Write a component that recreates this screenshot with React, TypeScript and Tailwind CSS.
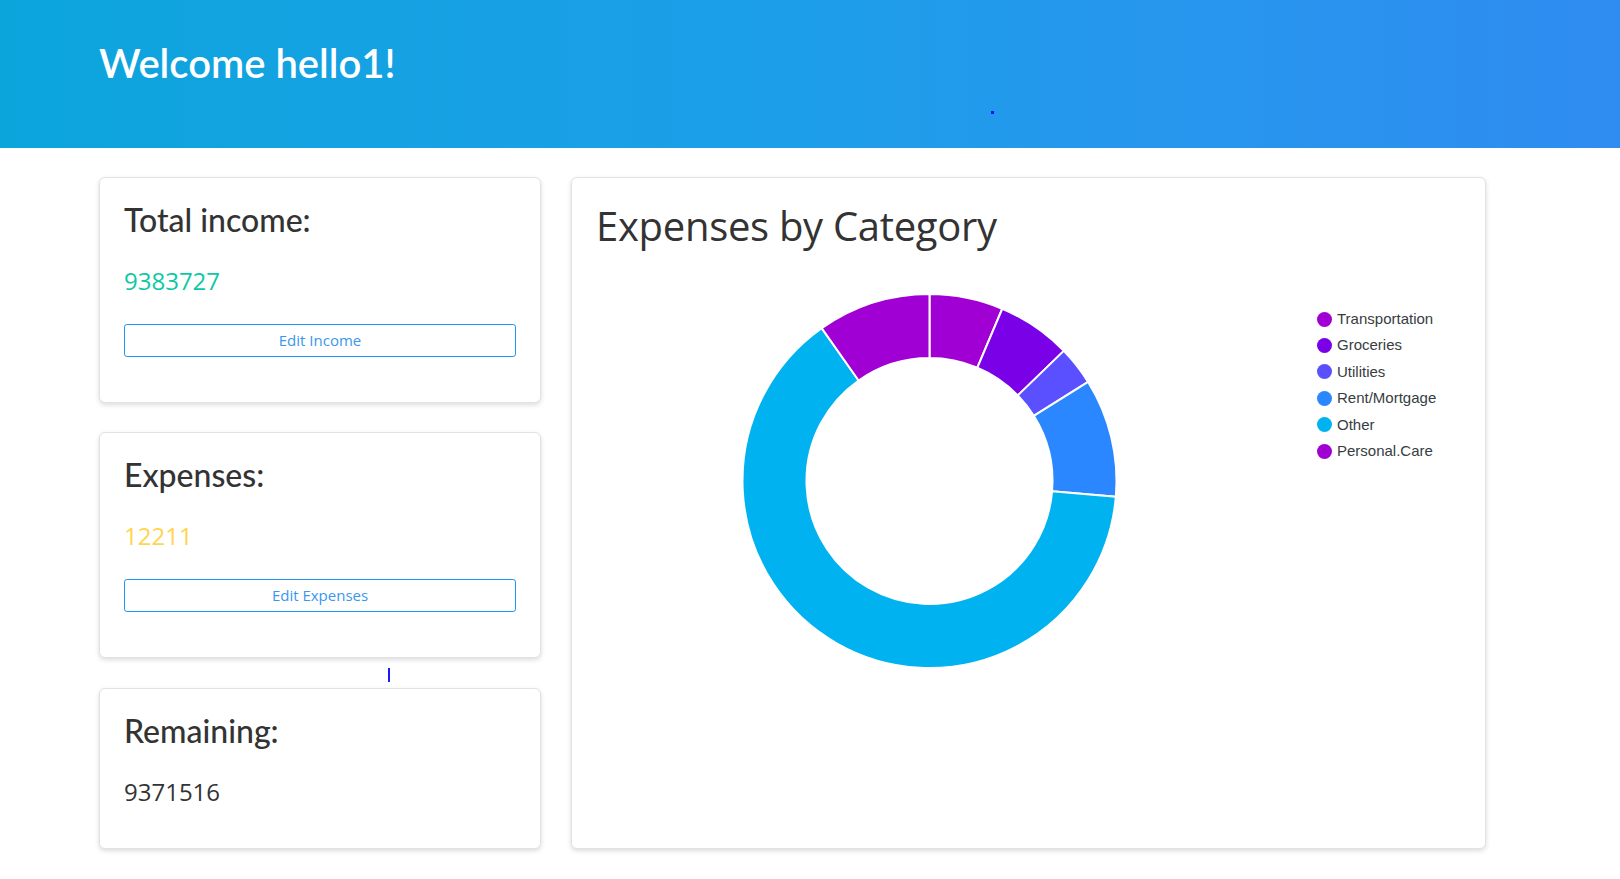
import React from "react";

type Slice = { label: string; color: string; start: number; end: number };

const slices: Slice[] = [
  { label: "Transportation", color: "#a000d4", start: 0, end: 22.9 },
  { label: "Groceries", color: "#7a00e8", start: 22.9, end: 45.9 },
  { label: "Utilities", color: "#5a50ff", start: 45.9, end: 58 },
  { label: "Rent/Mortgage", color: "#2b87ff", start: 58, end: 94.8 },
  { label: "Other", color: "#00b3f0", start: 94.8, end: 324.8 },
  { label: "Personal.Care", color: "#a000d4", start: 324.8, end: 360 },
];

function pt(cx: number, cy: number, r: number, deg: number): [number, number] {
  const a = (deg * Math.PI) / 180;
  return [cx + r * Math.sin(a), cy - r * Math.cos(a)];
}

function arcPath(cx: number, cy: number, r0: number, r1: number, a0: number, a1: number) {
  const large = a1 - a0 > 180 ? 1 : 0;
  const [x1, y1] = pt(cx, cy, r1, a0);
  const [x2, y2] = pt(cx, cy, r1, a1);
  const [x3, y3] = pt(cx, cy, r0, a1);
  const [x4, y4] = pt(cx, cy, r0, a0);
  return `M ${x1} ${y1} A ${r1} ${r1} 0 ${large} 1 ${x2} ${y2} L ${x3} ${y3} A ${r0} ${r0} 0 ${large} 0 ${x4} ${y4} Z`;
}

function Card({
  title,
  value,
  valueClass,
  button,
  className,
}: {
  title: string;
  value: string;
  valueClass: string;
  button?: string;
  className: string;
}) {
  return (
    <div
      className={`rounded-[6px] border border-[#e2e2e2] bg-white px-[24px] pt-[23px] shadow-[0_2px_5px_rgba(0,0,0,0.14)] ${className}`}
    >
      <h2 className="font-['Lato',sans-serif] text-[32px] leading-[38px] font-medium text-[#333333]">{title}</h2>
      <div className={`mt-[27px] text-[24px] leading-[29px] ${valueClass}`}>{value}</div>
      {button && (
        <button className="mt-[29px] block h-[33px] w-full rounded-[3px] border border-[#2196f3] bg-white text-[15px] leading-[31px] text-[#3a97ee]">
          {button}
        </button>
      )}
    </div>
  );
}

export default function App() {
  const cx = 333.5;
  const cy = 200;
  return (
    <div className="min-h-screen bg-white font-['Open_Sans',sans-serif]">
      <header className="relative h-[148px] bg-linear-to-r from-[#0ba5dc] via-[#1d9eea] to-[#2f8cf1] pl-[99px] pt-[39px]">
        <h1 className="font-['Lato',sans-serif] text-[40px] leading-[48px] font-semibold text-white">Welcome hello1!</h1>
        <span className="absolute left-[991px] top-[111px] h-[3px] w-[3px] bg-[#1010ff]" />
      </header>
      <main className="relative flex items-stretch gap-[30px] pl-[99px] pt-[29px]">
        <div className="flex w-[442px] flex-col">
          <Card
            title="Total income:"
            value="9383727"
            valueClass="text-[#0cc9a3]"
            button="Edit Income"
            className="mb-[29px] pb-[45px]"
          />
          <Card
            title="Expenses:"
            value="12211"
            valueClass="text-[#ffd54f]"
            button="Edit Expenses"
            className="mb-[30px] pb-[45px]"
          />
          <Card
            title="Remaining:"
            value="9371516"
            valueClass="text-[#333333]"
            className="pb-[42px]"
          />
        </div>
        <span className="absolute left-[388px] top-[520px] h-[14px] w-[2px] bg-[#1a1aff]" />
        <div className="w-[915px] rounded-[6px] border border-[#e2e2e2] bg-white px-[24px] pt-[24px] shadow-[0_2px_5px_rgba(0,0,0,0.14)]">
          <h2 className="text-[40px] leading-[48px] font-medium tracking-[-0.3px] text-[#333333]">Expenses by Category</h2>
          <div className="mt-[31px] flex items-start">
            <svg width="667" height="400" viewBox="0 0 667 400">
              {slices.map((s) => (
                <path
                  key={s.label}
                  d={arcPath(cx, cy, 123, 187, s.start, s.end)}
                  fill={s.color}
                  stroke="#ffffff"
                  strokeWidth={2}
                  strokeLinejoin="round"
                />
              ))}
            </svg>
            <ul className="ml-[54px] mt-[25px] flex flex-col font-['Liberation_Sans',Arial,sans-serif] text-[15px] text-[#373d3f]">
              {slices.map((s) => (
                <li key={s.label} className="flex h-[26.4px] items-center">
                  <span
                    className="mr-[5px] inline-block h-[15px] w-[15px] rounded-full"
                    style={{ backgroundColor: s.color }}
                  />
                  <span>{s.label}</span>
                </li>
              ))}
            </ul>
          </div>
        </div>
      </main>
    </div>
  );
}
